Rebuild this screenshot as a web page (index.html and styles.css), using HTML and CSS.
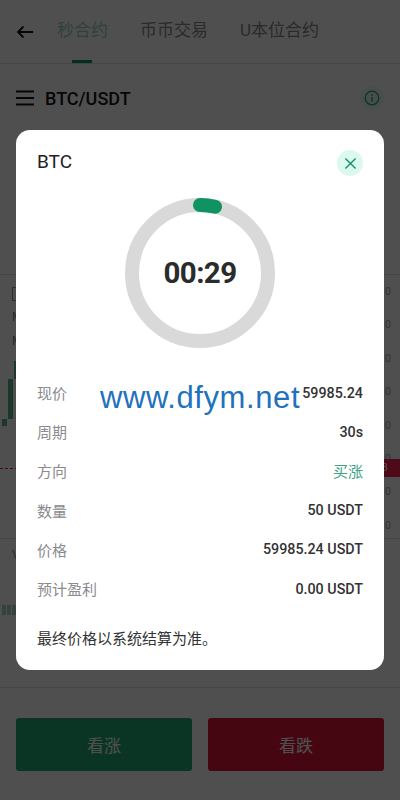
FILE: index.html
```html
<!DOCTYPE html>
<html lang="zh">
<head>
<meta charset="utf-8">
<title>BTC/USDT</title>
<link rel="stylesheet" href="styles.css">
</head>
<body>
<div class="page">
  <header class="top">
    <svg class="back" viewBox="0 0 18 14"><path d="M17 7H2M7.500 1.500 2 7l5.500 5.500" fill="none" stroke="#141414" stroke-width="1.800"/></svg>
    <nav class="tabs">
      <span class="tab active">秒合约</span>
      <span class="tab">币币交易</span>
      <span class="tab">U本位合约</span>
    </nav>
  </header>
  <section class="pair">
    <div class="pair-left">
      <svg class="menu" viewBox="0 0 18 16"><path d="M0 1.500h18M0 8h18M0 14.500h18" stroke="#141414" stroke-width="1.800"/></svg>
      <span class="pair-name">BTC/USDT</span>
    </div>
    <span class="info"><svg viewBox="0 0 16 16"><circle cx="8" cy="8" r="6.800" fill="none" stroke="#2aa87c" stroke-width="1.300"/><path d="M8 7v4.500M8 4.200v1.500" stroke="#2aa87c" stroke-width="1.500"/></svg></span>
  </section>
  <section class="chart">
    <div class="legend">
      <svg class="legend-icon" viewBox="0 0 10 14"><rect x=".5" y=".5" width="9" height="13" fill="none" stroke="#999"/></svg>
      <span>M</span>
      <span>M</span>
    </div>
    <div class="axis"><span>0</span><span>0</span><span>0</span><span>0</span><span>0</span><span>0</span><span>0</span><span>0</span></div>
    <i class="candle c1"></i><i class="candle c2"></i><i class="candle c3"></i>
    <i class="price-line"></i><span class="price-tag">3</span>
  </section>
  <section class="volume"><span class="vol-label">V</span><div class="bars"><i></i><i></i><i></i></div></section>
  <footer class="actions">
    <button class="btn up">看涨</button>
    <button class="btn down">看跌</button>
  </footer>
</div>
<div class="overlay"></div>
<div class="modal">
  <div class="modal-head">
    <span class="coin">BTC</span>
    <span class="close"><svg viewBox="0 0 14 14"><path d="M1.500 1.500l11 11M12.500 1.500l-11 11" stroke="#0f9565" stroke-width="1.500" fill="none"/></svg></span>
  </div>
  <div class="ring">
    <svg viewBox="0 0 150 150"><circle cx="75" cy="75" r="68" fill="none" stroke="#d9d9d9" stroke-width="14"/><path d="M75 7a68 68 0 0 1 15 1.700" fill="none" stroke="#0f9362" stroke-width="14" stroke-linecap="round"/></svg>
    <span class="time">00:29</span>
  </div>
  <dl class="rows">
    <div class="row"><dt>现价</dt><dd>59985.24</dd></div>
    <div class="row"><dt>周期</dt><dd>30s</dd></div>
    <div class="row"><dt>方向</dt><dd class="buy">买涨</dd></div>
    <div class="row"><dt>数量</dt><dd>50 USDT</dd></div>
    <div class="row"><dt>价格</dt><dd>59985.24 USDT</dd></div>
    <div class="row"><dt>预计盈利</dt><dd>0.00 USDT</dd></div>
  </dl>
  <p class="note">最终价格以系统结算为准。</p>
</div>
<div class="watermark">www.dfym.net</div>
</body>
</html>
```
FILE: styles.css
```css
* { box-sizing: border-box; }
html, body { margin: 0; height: 100%; }
body {
  width: 400px; height: 800px; overflow: hidden; position: relative;
  background: #fff; color: #141414;
  font-family: "Roboto", "Noto Sans CJK SC", sans-serif;
}
.page { display: flex; flex-direction: column; height: 800px; }
.top { display: flex; align-items: center; height: 64px; padding-left: 16px; border-bottom: 1px solid #ddd; flex: none; }
.back { width: 18px; height: 14px; margin-right: 23px; }
.tabs { display: flex; gap: 32px; height: 64px; }
.tab { font-size: 17px; line-height: 60px; color: #888; position: relative; }
.tab.active { color: #9ad6bf; }
.tab.active::after { content: ""; position: absolute; left: 15px; width: 20px; bottom: 1px; height: 3px; background: #0f9565; }
.pair { display: flex; justify-content: space-between; align-items: center; padding: 0 16px; height: 68px; flex: none; }
.pair-left { display: flex; align-items: center; gap: 11px; }
.menu { width: 18px; height: 16px; }
.pair-name { font-size: 18px; font-weight: 500; color: #141414; }
.info { width: 24px; height: 24px; border-radius: 50%; background: #e6fbf2; display: flex; align-items: center; justify-content: center; }
.info svg { width: 16px; height: 16px; }
.chart { height: 265px; margin-top: 142px; border-top: 1px solid #ddd; border-bottom: 1px solid #ddd; position: relative; flex: none; }
.legend { position: absolute; left: 12px; top: 12px; display: flex; flex-direction: column; gap: 8px; font-size: 12px; line-height: 16px; color: #888; align-items: flex-start; }
.legend-icon { width: 10px; height: 14px; }
.axis { position: absolute; right: 9px; top: 8px; display: flex; flex-direction: column; gap: 15.400px; font-size: 11px; line-height: 18px; color: #aaa; }
.candle { position: absolute; background: #5ab58c; }
.c1 { left: 2px; top: 144px; width: 5px; height: 7px; }
.c2 { left: 8px; top: 104px; width: 5px; height: 40px; }
.c3 { left: 14px; top: 86px; width: 4px; height: 18px; }
.price-line { position: absolute; left: 0; right: 0; top: 193px; border-top: 1px dashed #e8224f; }
.price-tag { position: absolute; right: 0; top: 184px; width: 60px; height: 18px; background: #ff2255; color: #fff; font-size: 11px; line-height: 18px; text-align: right; padding-right: 12px; }
.volume { height: 149px; position: relative; border-bottom: 1px solid #ddd; flex: none; }
.vol-label { position: absolute; left: 12px; top: 8px; font-size: 13px; line-height: 16px; color: #999; }
.bars { position: absolute; left: 2px; bottom: 72px; display: flex; gap: 1px; align-items: flex-end; }
.bars i { width: 4px; height: 10px; background: #a9d8c5; }
.actions { display: flex; gap: 16px; padding: 30px 16px 0; }
.btn { flex: 1; height: 53px; border: 0; border-radius: 3px; font: inherit; font-size: 17px; color: #fff; }
.up { background: #21aa75; }
.down { background: #df143c; }
.overlay { position: absolute; inset: 0; background: rgba(0,0,0,.69); }
.modal { position: absolute; left: 16px; top: 130px; width: 368px; height: 540px; background: #fff; border-radius: 14px; padding: 20px 21px 0; }
.modal-head { display: flex; justify-content: space-between; align-items: flex-start; height: 48px; }
.coin { font-size: 19px; line-height: 24px; color: #222; font-weight: 400; }
.close { width: 26px; height: 26px; border-radius: 50%; background: #dcf9ef; display: flex; align-items: center; justify-content: center; }
.close svg { width: 13px; height: 13px; }
.ring { width: 150px; height: 150px; margin: 0 auto; position: relative; display: flex; align-items: center; justify-content: center; }
.ring svg { position: absolute; inset: 0; }
.time { position: relative; font-size: 29.500px; font-weight: 700; color: #2b2b2b; letter-spacing: -.6px; }
.rows { margin: 25px 0 0; display: flex; flex-direction: column; }
.row { display: flex; justify-content: space-between; align-items: center; height: 39.200px; }
.row dt { font-size: 15px; color: #8a8a8f; }
.row dd { margin: 0; font-size: 14.300px; font-weight: 500; color: #333; }
.row dd.buy { color: #3ba283; font-weight: 400; font-size: 15px; }
.note { margin: 20px 0 0; font-size: 15px; color: #333; line-height: 22px; }
.watermark { position: absolute; left: 100px; top: 379px; font-family: "Liberation Sans", sans-serif; font-size: 31px; line-height: 37px; color: #1f72bd; letter-spacing: .6px; white-space: nowrap; }
```
